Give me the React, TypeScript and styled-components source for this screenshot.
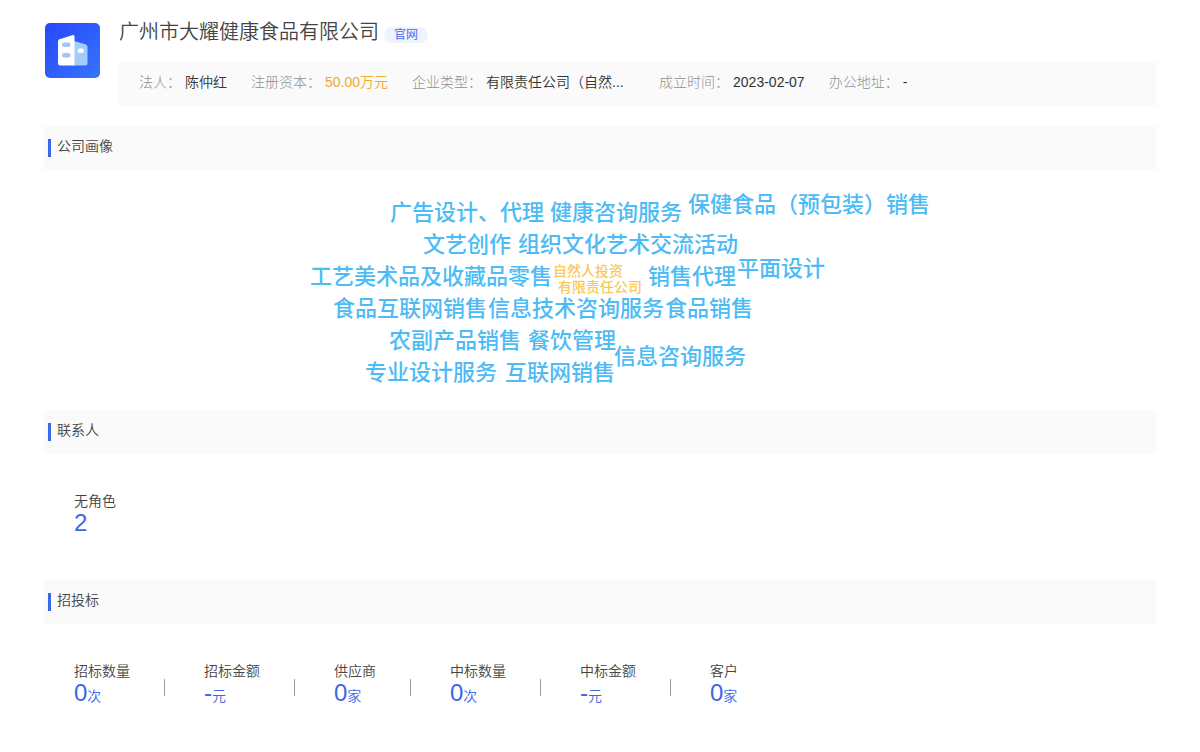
import React from "react";
import styled, { createGlobalStyle } from "styled-components";

const GlobalStyle = createGlobalStyle`
  * { box-sizing: border-box; }
  body {
    margin: 0;
    background: #fff;
    color: #444;
    font-family: "Liberation Sans", "Noto Sans CJK SC", sans-serif;
    font-size: 14px;
    font-weight: 350;
    line-height: 20px;
  }
  h1, h2, dl, dt, dd, ul { margin: 0; padding: 0; font-weight: inherit; }
  ul { list-style: none; }
`;

const Page = styled.main`
  padding: 20px 44px 0;
`;

const Header = styled.header`
  display: flex;
  gap: 18px;
  margin-bottom: 20px;
`;

const Logo = styled.svg`
  flex: none;
  width: 57px;
  height: 57px;
  margin-top: 2px;
`;

const HeaderBody = styled.div`
  flex: 1;
  min-width: 0;
`;

const TitleRow = styled.div`
  display: flex;
  align-items: flex-start;
  gap: 5px;
  height: 42px;
`;

const Title = styled.h1`
  font-size: 20px;
  line-height: 24px;
`;

const SiteLink = styled.a`
  margin-top: 7px;
  padding: 0 10px;
  border-radius: 9px;
  background: #edf3ff;
  color: #3a66e8;
  font-size: 12px;
  line-height: 16px;
  text-decoration: none;
`;

const Facts = styled.dl`
  display: flex;
  flex-wrap: wrap;
  column-gap: 24px;
  padding: 10px 20px 14px;
  background: #fafafa;
`;

const Fact = styled.div`
  display: flex;
  gap: 4px;
`;

const FactLabel = styled.dt`
  color: #909090;
  font-weight: 300;
`;

const FactValue = styled.dd<{ $accent?: boolean }>`
  white-space: nowrap;
  color: ${(p) => (p.$accent ? "#f0a92e" : "#333")};
`;

const WideFact = styled(Fact)`
  width: 223px;
`;

const SectionTitle = styled.h2`
  display: flex;
  align-items: flex-start;
  gap: 6px;
  padding: 10px 4px 13px;
  background: #fafafa;
  font-size: 14px;

  &::before {
    content: "";
    width: 3px;
    height: 18px;
    margin-top: 3px;
    background: #3a66e8;
  }
`;

const Cloud = styled.ul`
  position: relative;
  height: 240px;
`;

const Word = styled.li<{ $x: number; $y: number; $small?: boolean }>`
  position: absolute;
  left: calc(50% + ${(p) => p.$x}px);
  top: ${(p) => p.$y}px;
  color: ${(p) => (p.$small ? "#fac858" : "#4dbbf5")};
  font-size: ${(p) => (p.$small ? 14 : 22)}px;
  font-weight: 500;
  line-height: 32px;
  white-space: nowrap;
`;

const Stats = styled.dl`
  display: flex;
  flex-wrap: wrap;
  padding: 37px 30px 0;
  min-height: 126px;
`;

const Stat = styled.div`
  display: flex;

  &:not(:last-child)::after {
    content: "";
    width: 1px;
    height: 17px;
    margin: 18px 39px 0 34px;
    background: #999;
  }
`;

const StatLabel = styled.dt`
  line-height: 20px;
`;

const StatValue = styled.dd`
  color: #3a66e8;
  font-size: 24px;
  line-height: 24px;
`;

const Unit = styled.span`
  font-size: 14px;
`;

const words: { text: string; x: number; y: number; small?: boolean }[] = [
  { text: "广告设计、代理", x: -210, y: 27 },
  { text: "健康咨询服务", x: -50, y: 27 },
  { text: "保健食品（预包装）销售", x: 88, y: 19 },
  { text: "文艺创作", x: -177, y: 59 },
  { text: "组织文化艺术交流活动", x: -82, y: 59 },
  { text: "工艺美术品及收藏品零售", x: -290, y: 91 },
  { text: "自然人投资", x: -47, y: 85, small: true },
  { text: "有限责任公司", x: -42, y: 101, small: true },
  { text: "销售代理", x: 48, y: 91 },
  { text: "平面设计", x: 137, y: 83 },
  { text: "食品互联网销售", x: -267, y: 123 },
  { text: "信息技术咨询服务", x: -112, y: 123 },
  { text: "食品销售", x: 65, y: 123 },
  { text: "农副产品销售", x: -211, y: 155 },
  { text: "餐饮管理", x: -72, y: 155 },
  { text: "信息咨询服务", x: 14, y: 171 },
  { text: "专业设计服务", x: -235, y: 187 },
  { text: "互联网销售", x: -95, y: 187 },
];

const bids = [
  { label: "招标数量", value: "0", unit: "次" },
  { label: "招标金额", value: "-", unit: "元" },
  { label: "供应商", value: "0", unit: "家" },
  { label: "中标数量", value: "0", unit: "次" },
  { label: "中标金额", value: "-", unit: "元" },
  { label: "客户", value: "0", unit: "家" },
];

function CompanyLogo() {
  return (
    <Logo viewBox="0 0 57 57" role="img" aria-label="企业">
      <defs>
        <linearGradient id="tile" x1="0" y1="0" x2="1" y2="1">
          <stop offset="0" stopColor="#2648fb" />
          <stop offset="1" stopColor="#3873fb" />
        </linearGradient>
      </defs>
      <rect x="1" y="1" width="55" height="55" rx="5" fill="url(#tile)" />
      <path d="M30 19 L41.5 22.2 Q43.5 23 43.5 25 V41 Q43.5 43.5 41 43.5 H30 Z" fill="#a3cbfb" />
      <path d="M15.500 17.200 L28 13.200 Q30.500 12.500 30.500 14.500 V43.500 H16.500 Q14 43.500 14 41 V19.500 Q14 17.800 15.500 17.200 Z" fill="#fff" />
      <rect x="18" y="20.500" width="8.500" height="4.500" rx="2.200" fill="#a3c4fa" />
      <rect x="18" y="31" width="8.500" height="4.500" rx="2.200" fill="#a3c4fa" />
      <rect x="33.500" y="26.500" width="6.500" height="4.500" rx="2.200" fill="#fff" />
    </Logo>
  );
}

export default function App() {
  return (
    <>
      <GlobalStyle />
      <Page>
        <Header>
          <CompanyLogo />
          <HeaderBody>
            <TitleRow>
              <Title>广州市大耀健康食品有限公司</Title>
              <SiteLink href="#">官网</SiteLink>
            </TitleRow>
            <Facts>
              <Fact>
                <FactLabel>法人：</FactLabel>
                <FactValue>陈仲红</FactValue>
              </Fact>
              <Fact>
                <FactLabel>注册资本：</FactLabel>
                <FactValue $accent>50.00万元</FactValue>
              </Fact>
              <WideFact>
                <FactLabel>企业类型：</FactLabel>
                <FactValue>有限责任公司（自然...</FactValue>
              </WideFact>
              <Fact>
                <FactLabel>成立时间：</FactLabel>
                <FactValue>2023-02-07</FactValue>
              </Fact>
              <Fact>
                <FactLabel>办公地址：</FactLabel>
                <FactValue>-</FactValue>
              </Fact>
            </Facts>
          </HeaderBody>
        </Header>

        <section>
          <SectionTitle>公司画像</SectionTitle>
          <Cloud>
            {words.map((w) => (
              <Word key={w.text} $x={w.x} $y={w.y} $small={w.small}>
                {w.text}
              </Word>
            ))}
          </Cloud>
        </section>

        <section>
          <SectionTitle>联系人</SectionTitle>
          <Stats>
            <Stat>
              <div>
                <StatLabel>无角色</StatLabel>
                <StatValue>2</StatValue>
              </div>
            </Stat>
          </Stats>
        </section>

        <section>
          <SectionTitle>招投标</SectionTitle>
          <Stats>
            {bids.map((b) => (
              <Stat key={b.label}>
                <div>
                  <StatLabel>{b.label}</StatLabel>
                  <StatValue>
                    {b.value}
                    <Unit>{b.unit}</Unit>
                  </StatValue>
                </div>
              </Stat>
            ))}
          </Stats>
        </section>
      </Page>
    </>
  );
}
